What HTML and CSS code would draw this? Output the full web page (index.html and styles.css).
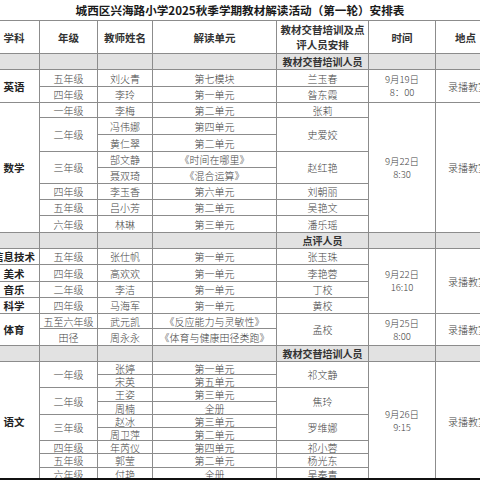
FILE: index.html
```html
<!DOCTYPE html>
<html lang="zh-CN">
<head>
<meta charset="utf-8">
<link rel="stylesheet" href="styles.css">
</head>
<body>
<div class="title">城西区兴海路小学2025秋季学期教材解读活动（第一轮）安排表</div>
<table class="sheet">
<colgroup>
<col class="c1"><col class="c2"><col class="c3"><col class="c4"><col class="c5"><col class="c6"><col class="c7">
</colgroup>
<tr class="h33 head">
<td>学科</td><td>年级</td><td>教师姓名</td><td>解读单元</td><td>教材交替培训及点<br>评人员安排</td><td>时间</td><td>地点</td>
</tr>
<tr class="h16 gray"><td></td><td></td><td></td><td></td><td class="b">教材交替培训人员</td><td></td><td></td></tr>

<tr class="h17"><td class="subj" rowspan="2">英语</td><td>五年级</td><td>刘火青</td><td>第七模块</td><td>兰玉春</td><td class="time" rowspan="2">9月19日<br>8：00</td><td class="place" rowspan="2">录播教室</td></tr>
<tr class="h16"><td>四年级</td><td>李玲</td><td>第一单元</td><td>昝东霞</td></tr>

<tr class="h15"><td class="subj" rowspan="8">数学</td><td>一年级</td><td>李梅</td><td>第二单元</td><td>张莉</td><td class="time" rowspan="8">9月22日<br>8:30</td><td class="place" rowspan="8">录播教室</td></tr>
<tr class="h17"><td rowspan="2">二年级</td><td>冯伟娜</td><td>第四单元</td><td rowspan="2">史爱姣</td></tr>
<tr class="h17"><td>黄仁翠</td><td>第二单元</td></tr>
<tr class="h16"><td rowspan="2">三年级</td><td>郜文静</td><td>《时间在哪里》</td><td rowspan="2">赵红艳</td></tr>
<tr class="h16"><td>聂双琦</td><td>《混合运算》</td></tr>
<tr class="h16"><td>四年级</td><td>李玉香</td><td>第六单元</td><td>刘朝丽</td></tr>
<tr class="h16"><td>五年级</td><td>吕小芳</td><td>第二单元</td><td>吴艳文</td></tr>
<tr class="h17"><td>六年级</td><td>林琳</td><td>第三单元</td><td>潘乐瑶</td></tr>

<tr class="h16 gray"><td></td><td></td><td></td><td></td><td class="b">点评人员</td><td></td><td></td></tr>

<tr class="h16"><td class="subj">信息技术</td><td>五年级</td><td>张仕帆</td><td>第一单元</td><td>张玉珠</td><td class="time" rowspan="4">9月22日<br>16:10</td><td class="place" rowspan="4">录播教室</td></tr>
<tr class="h17"><td class="subj">美术</td><td>四年级</td><td>高欢欢</td><td>第一单元</td><td>李艳蓉</td></tr>
<tr class="h16"><td class="subj">音乐</td><td>二年级</td><td>李洁</td><td>第一单元</td><td>丁校</td></tr>
<tr class="h16"><td class="subj">科学</td><td>四年级</td><td>马海军</td><td>第一单元</td><td>黄校</td></tr>
<tr class="h15"><td class="subj" rowspan="2">体育</td><td>五至六年级</td><td>武元凯</td><td>《反应能力与灵敏性》</td><td rowspan="2">孟校</td><td class="time" rowspan="2">9月25日<br>8:00</td><td class="place" rowspan="2">录播教室</td></tr>
<tr class="h17"><td>田径</td><td>周永永</td><td>《体育与健康田径类跑》</td></tr>

<tr class="h16 gray"><td></td><td></td><td></td><td></td><td class="b">教材交替培训人员</td><td></td><td></td></tr>

<tr class="h13"><td class="subj" rowspan="9">语文</td><td rowspan="2">一年级</td><td>张婷</td><td>第一单元</td><td rowspan="2">祁文静</td><td class="time" rowspan="9">9月26日<br>9:15</td><td class="place" rowspan="9">录播教室</td></tr>
<tr class="h13"><td>宋英</td><td>第五单元</td></tr>
<tr class="h14"><td rowspan="2">二年级</td><td>王姿</td><td>第三单元</td><td rowspan="2">焦玲</td></tr>
<tr class="h13"><td>周楠</td><td>全册</td></tr>
<tr class="h13"><td rowspan="2">三年级</td><td>赵冰</td><td>第三单元</td><td rowspan="2">罗维娜</td></tr>
<tr class="h13"><td>周卫萍</td><td>第二单元</td></tr>
<tr class="h13"><td>四年级</td><td>年芮仪</td><td>第四单元</td><td>祁小蓉</td></tr>
<tr class="h14"><td>五年级</td><td>郭莹</td><td>第二单元</td><td>杨光东</td></tr>
<tr class="h13"><td>六年级</td><td>付艳</td><td>全册</td><td>吴秦青</td></tr>
</table>
<div class="edge"></div>
</body>
</html>
```
FILE: styles.css
```css
html, body {
  margin: 0;
  padding: 0;
  background: #ffffff;
  overflow: hidden;
  width: 480px;
  height: 480px;
}
body {
  position: relative;
  font-family: "Noto Sans CJK SC", "Noto Sans", sans-serif;
}
.title {
  height: 20px;
  line-height: 20px;
  text-align: center;
  font-size: 11.6px;
  font-weight: 700;
  color: #1a1a1a;
  white-space: nowrap;
}
.sheet {
  border-collapse: collapse;
  table-layout: fixed;
  width: 507px;
  margin-left: -12px;
}
.c1 { width: 51px; }
.c2 { width: 58px; }
.c3 { width: 55px; }
.c4 { width: 124px; }
.c5 { width: 92px; }
.c6 { width: 67px; }
.c7 { width: 60px; }
.sheet td {
  border: 1px solid #8c8c8c;
  padding: 0;
  text-align: center;
  vertical-align: middle;
  font-size: 10px;
  line-height: 11px;
  font-weight: 300;
  color: #444444;
  white-space: nowrap;
  overflow: hidden;
}
.head td {
  font-size: 10.5px;
  line-height: 15px;
  font-weight: 700;
  color: #333333;
}
.gray td {
  background: #e2e2e2;
}
.sheet td.b {
  font-weight: 700;
  color: #333333;
}
.sheet td.subj {
  font-weight: 700;
  font-size: 10.5px;
  color: #222222;
}
.sheet td.time {
  font-size: 9.5px;
  line-height: 13px;
}
.sheet td.place {
  font-size: 10px;
  text-align: left;
  padding-left: 12px;
}
.h13 { height: 13px; }
.h14 { height: 14px; }
.h15 { height: 15px; }
.h16 { height: 16px; }
.h17 { height: 17px; }
.h33 { height: 33px; }
.edge {
  position: absolute;
  left: 0;
  top: 478px;
  width: 480px;
  height: 2px;
  background: #111111;
}
```
